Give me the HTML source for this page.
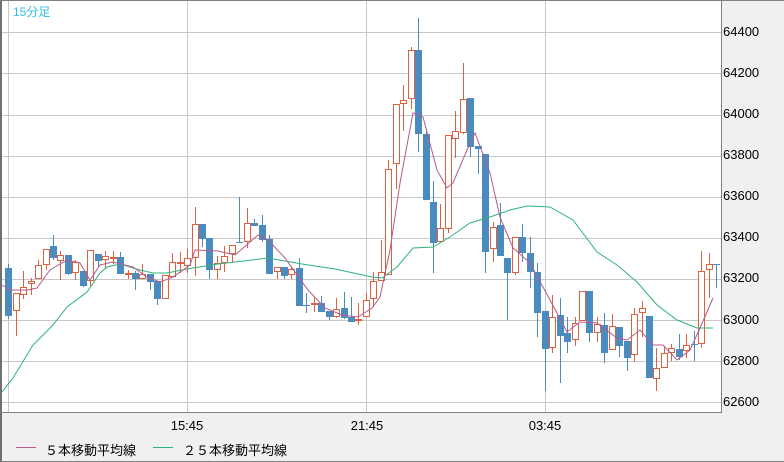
<!DOCTYPE html>
<html><head><meta charset="utf-8"><style>
html,body{margin:0;padding:0;}
body{width:784px;height:462px;background:#f0f0f0;position:relative;overflow:hidden;font-family:"Liberation Sans","Noto Sans CJK JP",sans-serif;}
#frame{position:absolute;left:0;top:0;width:782px;height:460px;border:1px solid #808080;border-left:2px solid #707070;box-sizing:content-box;}
svg{position:absolute;left:0;top:0;}
.yl{position:absolute;left:723px;font-size:13px;color:#000;line-height:14px;}
.tl{position:absolute;top:418px;font-size:13px;color:#000;width:60px;text-align:center;}
.lg{position:absolute;top:440px;font-size:13px;color:#000;letter-spacing:0px;}
.ln{position:absolute;top:447px;height:1px;width:20px;}
</style></head><body>
<div id="frame"></div>
<svg width="784" height="462" id="s">
<rect x="2" y="1" width="719" height="411" fill="#fff"/>
<g stroke="#c8c8c8" stroke-width="1" id="grid"></g>
<g id="c"></g>
<polyline id="g25" fill="none" stroke="#2db37a" stroke-width="1"/>
<polyline id="g5" fill="none" stroke="#b85a8c" stroke-width="1"/>
<line x1="721.5" y1="0" x2="721.5" y2="412.5" stroke="#808080"/>
<line x1="0" y1="412.5" x2="722" y2="412.5" stroke="#808080"/>
<line x1="0" y1="0.5" x2="784" y2="0.5" stroke="#808080"/>
</svg>
<div style="position:absolute;left:13px;top:3px;font-size:12px;color:#33bbee;">15分足</div>
<div class="yl" style="top:25px">64400</div>
<div class="yl" style="top:66px">64200</div>
<div class="yl" style="top:107px">64000</div>
<div class="yl" style="top:148px">63800</div>
<div class="yl" style="top:189px">63600</div>
<div class="yl" style="top:230px">63400</div>
<div class="yl" style="top:271px">63200</div>
<div class="yl" style="top:313px">63000</div>
<div class="yl" style="top:354px">62800</div>
<div class="yl" style="top:395px">62600</div>
<div class="tl" style="left:157px">15:45</div>
<div class="tl" style="left:337px">21:45</div>
<div class="tl" style="left:515px">03:45</div>
<div class="ln" style="left:16px;background:#b85a8c"></div>
<div class="lg" style="left:45px">５本移動平均線</div>
<div class="ln" style="left:153px;background:#2db37a"></div>
<div class="lg" style="left:183px">２５本移動平均線</div>
<script>
var ns="http://www.w3.org/2000/svg";
function el(t,a,p){var e=document.createElementNS(ns,t);for(var k in a)e.setAttribute(k,a[k]);p.appendChild(e);return e;}
var grid=document.getElementById('grid');
for(var k=0;k<10;k++){var y=Math.round(32.3+41.1*k)+0.5;el('line',{x1:2,y1:y,x2:721,y2:y},grid);}
[0,24,48,72].forEach(function(i){var x=Math.round(8.3+i*7.45)+0.5;el('line',{x1:x,y1:1,x2:x,y2:412},grid);});
var D=[[264,319,268,316,'d'],[293,336,293,311,'u'],[271,299,287,295,'u'],[278,295,281,284,'u'],[260,279,265,279,'u'],[249,270,249,265,'u'],[235,260,246,258,'d'],[251,280,255,261,'u'],[255,275,255,274,'d'],[260,280,262,273,'u'],
[271,287,271,286,'d'],[250,286,250,281,'u'],[254,267,254,261,'d'],[251,268,256,260,'u'],[251,264,257,259,'u'],[252,274,257,274,'d'],[270,279,273,275,'u'],[271,290,273,279,'d'],[264,279,274,279,'u'],[274,290,274,282,'d'],
[281,305,281,299,'d'],[275,299,275,299,'u'],[253,277,262,277,'u'],[252,273,262,263,'u'],[249,273,258,266,'u'],[207,276,224,258,'u'],[224,247,224,239,'d'],[238,279,238,270,'d'],[256,279,263,270,'u'],[246,272,256,263,'u'],
[245,263,245,254,'u'],[197,243,242,243,'d'],[208,248,223,242,'u'],[219,226,223,226,'d'],[215,242,225,240,'d'],[235,274,239,274,'d'],[267,279,267,272,'u'],[267,279,267,276,'d'],[267,279,269,275,'u'],[258,306,268,306,'d'],
[293,313,305,306,'d'],[298,312,303,305,'u'],[296,312,303,312,'d'],[311,320,311,317,'d'],[298,318,309,317,'u'],[292,319,308,318,'d'],[297,322,317,322,'d'],[303,325,319,320,'u'],[293,317,300,317,'u'],[272,307,281,299,'u'],
[240,281,272,281,'u'],[160,275,169,275,'u'],[104,189,104,164,'u'],[85,131,100,104,'u'],[47,109,50,99,'u'],[18,152,50,134,'d'],[129,200,134,200,'d'],[181,273,202,243,'d'],[204,242,228,242,'u'],[135,233,135,229,'u'],
[111,158,131,139,'u'],[63,134,99,133,'u'],[98,157,98,147,'d'],[146,174,146,149,'d'],[154,273,154,252,'d'],[222,262,227,249,'u'],[203,256,225,256,'d'],[258,320,258,273,'d'],[237,275,237,273,'u'],[224,262,237,253,'d'],
[237,288,253,272,'d'],[263,337,272,313,'d'],[311,391,311,349,'d'],[295,353,317,348,'u'],[298,383,315,336,'d'],[317,353,333,342,'d'],[317,346,323,340,'u'],[291,321,291,321,'u'],[291,342,291,333,'d'],[317,342,324,333,'u'],
[313,363,325,353,'d'],[314,350,326,350,'u'],[327,357,327,346,'d'],[341,371,341,358,'d'],[308,362,314,355,'u'],[301,337,308,313,'u'],[316,378,316,378,'d'],[348,391,368,379,'u'],[347,368,353,368,'u'],[344,361,348,353,'u'],
[334,360,349,357,'d'],[334,358,345,351,'u'],[331,361,344,345,'d'],[251,348,271,344,'u'],[253,298,264,270,'u'],[264,288,264,265,'d']];
var cg=document.getElementById('c');
D.forEach(function(d,i){var cx=Math.round(8.3+i*7.45);var col=d[4]=='u'?'#e0603e':'#4a8cc0';
el('line',{x1:cx+0.5,y1:d[0],x2:cx+0.5,y2:d[1],stroke:col,'stroke-width':1},cg);
var h=Math.max(d[3]-d[2],1);
if(d[4]=='u'){el('rect',{x:cx-2.5,y:d[2]+0.5,width:6,height:Math.max(h-1,1),fill:'#fff',stroke:col,'stroke-width':1},cg);}
else{el('rect',{x:cx-3,y:d[2],width:7,height:h,fill:col},cg);}
});
document.getElementById('g25').setAttribute('points',"2,392 13,378 33,345 53,325 67,307 87,292 100,273 107,267 120,264 140,270 153,273 167,273 187,269 218,264 252,260 268,258 285,261 302,264 335,269 372,277 382,278 397,267 413,248 433,247 450,237 470,223 490,217 510,210 527,206 550,207 573,220 597,252 617,265 637,282 657,305 677,320 697,328 713,328");
document.getElementById('g5').setAttribute('points',"2,285 10,290 27,290 37,288 50,270 67,260 80,263 90,280 100,265 113,262 133,267 147,277 160,282 173,277 190,265 195,250 218,251 235,255 258,235 268,240 285,258 308,290 325,308 342,315 358,317 372,308 380,297 390,250 400,183 413,113 423,117 437,170 447,188 453,183 467,150 475,133 490,173 500,217 513,248 530,263 550,300 567,332 580,322 597,323 617,338 627,340 640,330 653,345 663,345 677,360 690,350 700,328 713,298");
</script>
</body></html>
